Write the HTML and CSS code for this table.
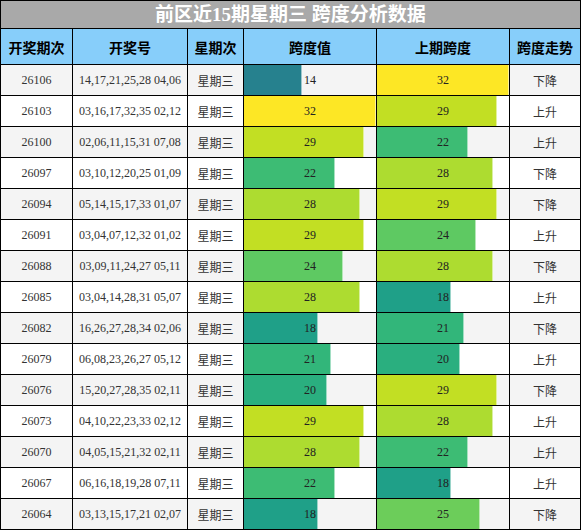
FILE: index.html
```html
<!DOCTYPE html>
<html lang="zh">
<head>
<meta charset="utf-8">
<title>前区近15期星期三 跨度分析数据</title>
<link rel="stylesheet" href="styles.css">
</head>
<body>
<div class="table">
  <div class="title">前区近15期星期三 跨度分析数据</div>
  <div class="th">开奖期次</div><div class="th">开奖号</div><div class="th">星期次</div><div class="th">跨度值</div><div class="th">上期跨度</div><div class="th">跨度走势</div>

  <div class="td odd num">26106</div><div class="td odd num">14,17,21,25,28 04,06</div><div class="td odd">星期三</div>
  <div class="td odd bar-cell"><div class="bar" style="width:43.75%;background:#26818e"></div><span class="val">14</span></div>
  <div class="td odd bar-cell"><div class="bar" style="width:100%;background:#fde725"></div><span class="val">32</span></div>
  <div class="td odd">下降</div>

  <div class="td num">26103</div><div class="td num">03,16,17,32,35 02,12</div><div class="td">星期三</div>
  <div class="td bar-cell"><div class="bar" style="width:100%;background:#fde725"></div><span class="val">32</span></div>
  <div class="td bar-cell"><div class="bar" style="width:90.625%;background:#c2df23"></div><span class="val">29</span></div>
  <div class="td">上升</div>

  <div class="td odd num">26100</div><div class="td odd num">02,06,11,15,31 07,08</div><div class="td odd">星期三</div>
  <div class="td odd bar-cell"><div class="bar" style="width:90.625%;background:#c2df23"></div><span class="val">29</span></div>
  <div class="td odd bar-cell"><div class="bar" style="width:68.75%;background:#3dbc74"></div><span class="val">22</span></div>
  <div class="td odd">上升</div>

  <div class="td num">26097</div><div class="td num">03,10,12,20,25 01,09</div><div class="td">星期三</div>
  <div class="td bar-cell"><div class="bar" style="width:68.75%;background:#3dbc74"></div><span class="val">22</span></div>
  <div class="td bar-cell"><div class="bar" style="width:87.5%;background:#addc30"></div><span class="val">28</span></div>
  <div class="td">下降</div>

  <div class="td odd num">26094</div><div class="td odd num">05,14,15,17,33 01,07</div><div class="td odd">星期三</div>
  <div class="td odd bar-cell"><div class="bar" style="width:87.5%;background:#addc30"></div><span class="val">28</span></div>
  <div class="td odd bar-cell"><div class="bar" style="width:90.625%;background:#c2df23"></div><span class="val">29</span></div>
  <div class="td odd">下降</div>

  <div class="td num">26091</div><div class="td num">03,04,07,12,32 01,02</div><div class="td">星期三</div>
  <div class="td bar-cell"><div class="bar" style="width:90.625%;background:#c2df23"></div><span class="val">29</span></div>
  <div class="td bar-cell"><div class="bar" style="width:75%;background:#5ec962"></div><span class="val">24</span></div>
  <div class="td">上升</div>

  <div class="td odd num">26088</div><div class="td odd num">03,09,11,24,27 05,11</div><div class="td odd">星期三</div>
  <div class="td odd bar-cell"><div class="bar" style="width:75%;background:#5ec962"></div><span class="val">24</span></div>
  <div class="td odd bar-cell"><div class="bar" style="width:87.5%;background:#addc30"></div><span class="val">28</span></div>
  <div class="td odd">下降</div>

  <div class="td num">26085</div><div class="td num">03,04,14,28,31 05,07</div><div class="td">星期三</div>
  <div class="td bar-cell"><div class="bar" style="width:87.5%;background:#addc30"></div><span class="val">28</span></div>
  <div class="td bar-cell"><div class="bar" style="width:56.25%;background:#1fa088"></div><span class="val">18</span></div>
  <div class="td">上升</div>

  <div class="td odd num">26082</div><div class="td odd num">16,26,27,28,34 02,06</div><div class="td odd">星期三</div>
  <div class="td odd bar-cell"><div class="bar" style="width:56.25%;background:#1fa088"></div><span class="val">18</span></div>
  <div class="td odd bar-cell"><div class="bar" style="width:65.625%;background:#32b67a"></div><span class="val">21</span></div>
  <div class="td odd">下降</div>

  <div class="td num">26079</div><div class="td num">06,08,23,26,27 05,12</div><div class="td">星期三</div>
  <div class="td bar-cell"><div class="bar" style="width:65.625%;background:#32b67a"></div><span class="val">21</span></div>
  <div class="td bar-cell"><div class="bar" style="width:62.5%;background:#2aaf7f"></div><span class="val">20</span></div>
  <div class="td">上升</div>

  <div class="td odd num">26076</div><div class="td odd num">15,20,27,28,35 02,11</div><div class="td odd">星期三</div>
  <div class="td odd bar-cell"><div class="bar" style="width:62.5%;background:#2aaf7f"></div><span class="val">20</span></div>
  <div class="td odd bar-cell"><div class="bar" style="width:90.625%;background:#c2df23"></div><span class="val">29</span></div>
  <div class="td odd">下降</div>

  <div class="td num">26073</div><div class="td num">04,10,22,23,33 02,12</div><div class="td">星期三</div>
  <div class="td bar-cell"><div class="bar" style="width:90.625%;background:#c2df23"></div><span class="val">29</span></div>
  <div class="td bar-cell"><div class="bar" style="width:87.5%;background:#addc30"></div><span class="val">28</span></div>
  <div class="td">上升</div>

  <div class="td odd num">26070</div><div class="td odd num">04,05,15,21,32 02,11</div><div class="td odd">星期三</div>
  <div class="td odd bar-cell"><div class="bar" style="width:87.5%;background:#addc30"></div><span class="val">28</span></div>
  <div class="td odd bar-cell"><div class="bar" style="width:68.75%;background:#3dbc74"></div><span class="val">22</span></div>
  <div class="td odd">上升</div>

  <div class="td num">26067</div><div class="td num">06,16,18,19,28 07,11</div><div class="td">星期三</div>
  <div class="td bar-cell"><div class="bar" style="width:68.75%;background:#3dbc74"></div><span class="val">22</span></div>
  <div class="td bar-cell"><div class="bar" style="width:56.25%;background:#1fa088"></div><span class="val">18</span></div>
  <div class="td">上升</div>

  <div class="td odd num">26064</div><div class="td odd num">03,13,15,17,21 02,07</div><div class="td odd">星期三</div>
  <div class="td odd bar-cell"><div class="bar" style="width:56.25%;background:#1fa088"></div><span class="val">18</span></div>
  <div class="td odd bar-cell"><div class="bar" style="width:78.125%;background:#6ccd5a"></div><span class="val">25</span></div>
  <div class="td odd">下降</div>
</div>
</body>
</html>
```

FILE: styles.css
```css
html, body {
  margin: 0;
  padding: 0;
  background: #ffffff;
}

body {
  font-family: "Liberation Serif", "Noto Sans CJK SC", serif;
  color: #333333;
}

.table {
  width: 581px;
  box-sizing: border-box;
  display: grid;
  grid-template-columns: 71px 114px 55px 132px 132px 70px;
  grid-template-rows: 27px 35px repeat(15, 30px);
  gap: 1px;
  padding: 1px;
  background: #000000;
}

.title {
  grid-column: 1 / -1;
  background: #a9a9a9;
  color: #ffffff;
  font-weight: bold;
  font-size: 19px;
  display: flex;
  align-items: center;
  justify-content: center;
  line-height: 1;
}

.th {
  background: #87cefa;
  color: #000000;
  font-family: "Noto Sans CJK SC", sans-serif;
  font-weight: bold;
  font-size: 14px;
  display: flex;
  align-items: center;
  justify-content: center;
}

.td {
  background: #ffffff;
  font-size: 12px;
  display: flex;
  align-items: center;
  justify-content: center;
  white-space: nowrap;
  font-family: "Noto Sans CJK SC", sans-serif;
}

.td.num {
  font-family: "Liberation Serif", serif;
}

.td.odd {
  background: #f4f4f4;
}

.bar-cell {
  position: relative;
  font-family: "Liberation Serif", serif;
}

.bar {
  position: absolute;
  left: 0;
  top: 0;
  bottom: 0;
  box-sizing: border-box;
  border-right: 1px solid rgba(255, 255, 255, 0.55);
}

.val {
  position: relative;
  color: #222222;
}
```
